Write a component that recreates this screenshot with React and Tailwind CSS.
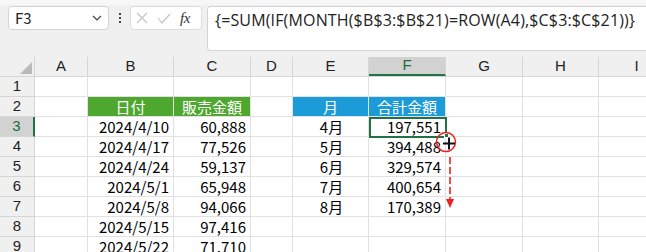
import React from "react";

const cols = [
  { key: "A", w: "w-[53px]" },
  { key: "B", w: "w-[86px]" },
  { key: "C", w: "w-[77px]" },
  { key: "D", w: "w-[42px]" },
  { key: "E", w: "w-[76px]" },
  { key: "F", w: "w-[77px]" },
  { key: "G", w: "w-[77px]" },
  { key: "H", w: "w-[76px]" },
  { key: "I", w: "w-[76px]" },
];

const sales = [
  ["2024/4/10", "60,888"],
  ["2024/4/17", "77,526"],
  ["2024/4/24", "59,137"],
  ["2024/5/1", "65,948"],
  ["2024/5/8", "94,066"],
  ["2024/5/15", "97,416"],
  ["2024/5/22", "71,710"],
];

const totals = [
  ["4月", "197,551"],
  ["5月", "394,488"],
  ["6月", "329,574"],
  ["7月", "400,654"],
  ["8月", "170,389"],
];

function cellContent(row, col) {
  // row is 1-based sheet row
  if (row === 2) {
    if (col === "B") return { text: "日付", cls: "bg-[#4ea72e] text-white text-center border-[#4ea72e]" };
    if (col === "C") return { text: "販売金額", cls: "bg-[#4ea72e] text-white text-center" };
    if (col === "E") return { text: "月", cls: "bg-[#1b9bd7] text-white text-center border-[#1b9bd7]" };
    if (col === "F") return { text: "合計金額", cls: "bg-[#1b9bd7] text-white text-center" };
  }
  const s = sales[row - 3];
  if (s) {
    if (col === "B") return { text: s[0], cls: "text-right pr-[4px]" };
    if (col === "C") return { text: s[1], cls: "text-right pr-[4px]" };
  }
  const t = totals[row - 3];
  if (t) {
    if (col === "E") return { text: t[0], cls: "text-center pl-[2px]" };
    if (col === "F") return { text: t[1], cls: "text-right pr-[4px]" };
  }
  return { text: "", cls: "" };
}

function FormulaBar() {
  return (
    <div className="h-[57px] bg-[#f0f0f0] border-t-[5px] border-[#f7f7f7] relative">
      <div className="flex items-start pt-[1px] pl-[8px]">
        <div className="w-[101px] h-[24px] bg-white border border-[#d4d4d4] rounded-[4px] flex items-center justify-between pl-[6px] pr-[6px] text-[15px] text-[#222]">
          <span>F3</span>
          <svg width="10" height="6" viewBox="0 0 10 6">
            <path d="M1 1 L5 5 L9 1" fill="none" stroke="#444" strokeWidth="1.2" />
          </svg>
        </div>
        <div className="w-[21px] h-[24px] flex flex-col items-center justify-center gap-[2px]">
          <span className="w-[2px] h-[2px] bg-[#444]" />
          <span className="w-[2px] h-[2px] bg-[#444]" />
          <span className="w-[2px] h-[2px] bg-[#444]" />
        </div>
        <div className="w-[72px] h-[24px] bg-white border border-[#dcdcdc] rounded-[4px] flex items-center pl-[5px] gap-[9px]">
          <svg width="12" height="12" viewBox="0 0 12 12">
            <path d="M1 1 L11 11 M11 1 L1 11" stroke="#c4c4c4" strokeWidth="1.2" />
          </svg>
          <svg width="14" height="11" viewBox="0 0 14 11">
            <path d="M1 5 L5 10 L13 1" fill="none" stroke="#c4c4c4" strokeWidth="1.2" />
          </svg>
          <span className="italic text-[15px] text-[#333] font-['Liberation_Serif',serif] tracking-[-0.5px]">fx</span>
        </div>
        <div className="ml-[5px] flex-1 h-[45px] bg-white border border-[#d4d4d4] rounded-l-[4px] border-r-0 pl-[7px] pt-[1px] text-[16px] tracking-[0.15px] text-[#222] font-['Open_Sans','Noto_Sans_CJK_JP',sans-serif] whitespace-nowrap overflow-hidden">
          {"{=SUM(IF(MONTH($B$3:$B$21)=ROW(A4),$C$3:$C$21))}"}
        </div>
      </div>
    </div>
  );
}

export default function App() {
  const rows = [1, 2, 3, 4, 5, 6, 7, 8, 9];
  return (
    <div className="w-[646px] h-[252px] overflow-hidden bg-white font-['Noto_Sans_CJK_JP','Noto_Sans',sans-serif] text-[15px] text-black relative">
      <FormulaBar />
      <div className="relative">
        {/* column headers */}
        <div className="flex h-[20px] bg-[#f0f0f0] border-b border-[#d6d6d6] whitespace-nowrap">
          <div className="w-[35px] shrink-0 border-r border-[#d6d6d6] relative">
            <svg className="absolute right-[2px] bottom-[2px]" width="12" height="12" viewBox="0 0 12 12">
              <path d="M12 0 L12 12 L0 12 Z" fill="#b9b9b9" />
            </svg>
          </div>
          {cols.map((c) => (
            <div
              key={c.key}
              className={`${c.w} shrink-0 flex items-center justify-center border-r border-[#d6d6d6] text-[15px] font-['Liberation_Sans',sans-serif] ${
                c.key === "F" ? "bg-[#d2d2d2] text-[#1d6b40] border-b-2 border-b-[#217346]" : "text-[#222]"
              }`}
            >
              {c.key}
            </div>
          ))}
        </div>
        {rows.map((r) => (
          <div key={r} className="flex h-[20px] whitespace-nowrap">
            <div
              className={`w-[35px] shrink-0 flex items-center justify-center border-b border-r border-[#d6d6d6] text-[15px] font-['Liberation_Sans',sans-serif] ${
                r === 3 ? "bg-[#d2d2d2] text-[#1d6b40] border-r-2 border-r-[#217346]" : "bg-[#f0f0f0] text-[#222]"
              }`}
            >
              {r}
            </div>
            {cols.map((c) => {
              const { text, cls } = cellContent(r, c.key);
              return (
                <div
                  key={c.key}
                  className={`${c.w} shrink-0 leading-[20px] border-b border-r border-[#e1e1e1] ${cls}`}
                >
                  {text}
                </div>
              );
            })}
          </div>
        ))}

        {/* active cell F3 */}
        <div className="absolute left-[369px] top-[60px] w-[78px] h-[21px] border-2 border-[#217346] pointer-events-none" />
        <div className="absolute left-[444px] top-[76px] w-[5px] h-[5px] bg-[#217346] border border-white" />

        {/* fill handle annotation */}
        <svg className="absolute left-[430px] top-[70px]" width="40" height="90" viewBox="0 0 40 90">
          <circle cx="16" cy="15" r="9.5" fill="none" stroke="#ee2020" strokeWidth="1.5" />
          <path d="M13 16.5 L25 16.5 M19 10.5 L19 22.5" stroke="#111" strokeWidth="2" />
          <path d="M20 30 L20 74" stroke="#ee2020" strokeWidth="1.6" strokeDasharray="7 3" />
          <path d="M16 72 L24 72 L20 81 Z" fill="#ee2020" />
        </svg>
      </div>
    </div>
  );
}
